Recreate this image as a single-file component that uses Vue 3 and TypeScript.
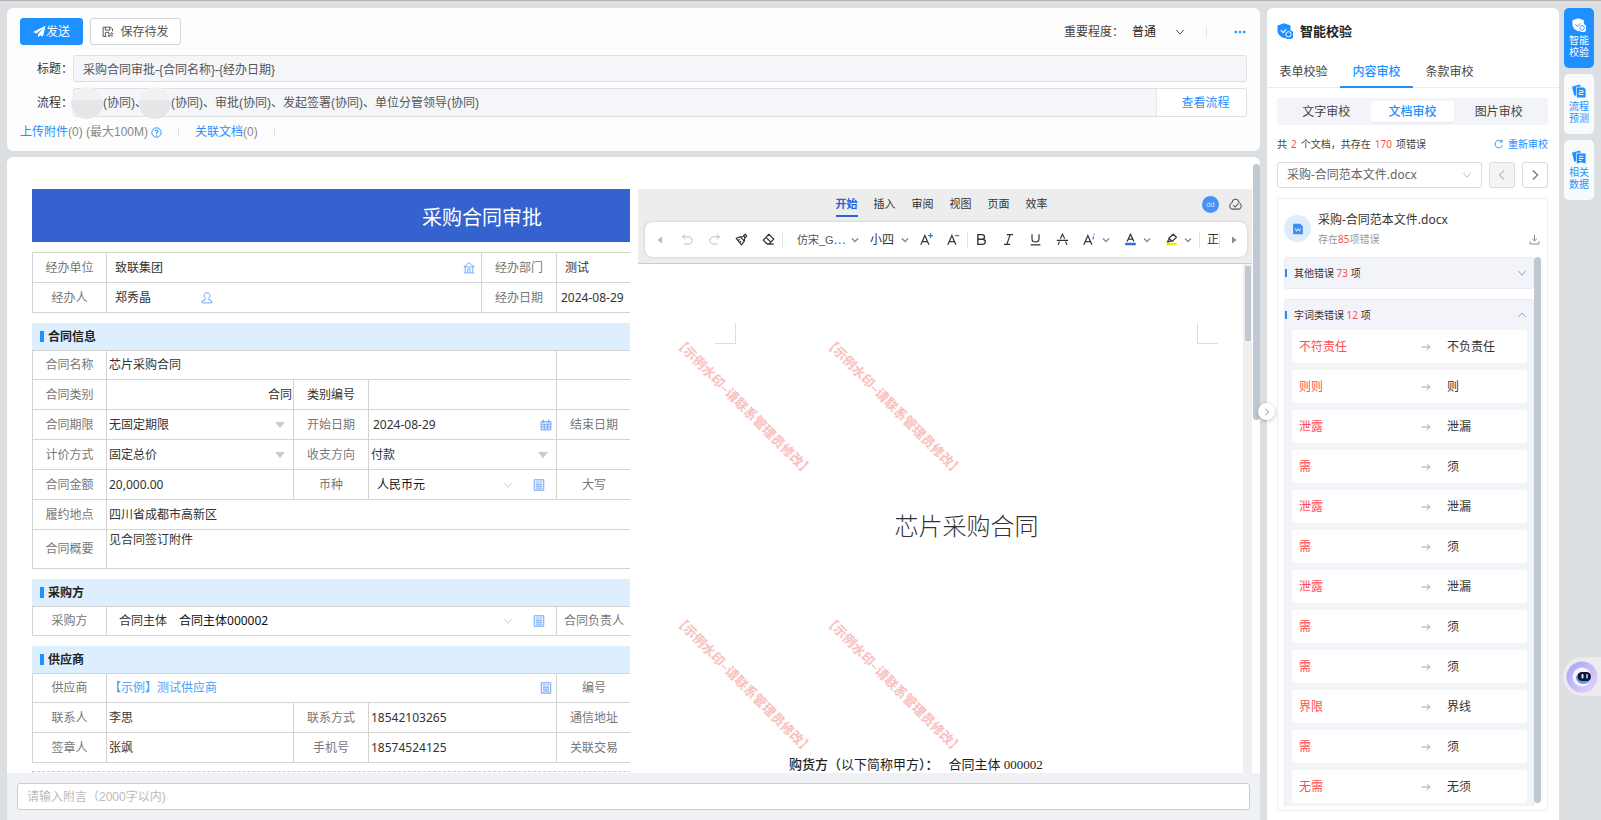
<script setup lang="ts">
import { ref } from 'vue'

type Kind = 'label' | 'input' | 'select' | 'area' | 'link' | 'empty'

interface Cell {
  kind: Kind
  id?: string
  text?: string
  span?: number
  icon?: string
  caret?: 'solid' | 'thin'
  tone?: string
  prefix?: string
}

interface Section {
  title?: string
  cols: number[]
  rows: Cell[][]
}

const icons: Record<string, string> = {
  send: '<path fill="currentColor" d="M15.5.8 0 8.6l4.3 1.900L12.600 4 6.200 11.300v4.200l2.500-3 3.600 1.600z"/>',
  save: '<path fill="none" stroke="currentColor" stroke-width="1.300" d="M6 14H1.500V1.500h10L14 4v3M4.500 1.500v4h6v-4M4.500 14V8.500h5M8 10.500h6.500l-2-2M14.500 13H8l2 2"/>',
  help: '<circle cx="8" cy="8" r="6.800" fill="none" stroke="currentColor" stroke-width="1.400"/><path fill="none" stroke="currentColor" stroke-width="1.500" d="M5.900 6.300C5.900 3.600 10.200 3.800 10.200 6.200 10.200 7.800 8 7.800 8 9.600M8 10.800v1.500"/>',
  chevDown: '<path fill="none" stroke="currentColor" stroke-width="1.500" d="M2 4.500l6 7 6-7"/>',
  chevUp: '<path fill="none" stroke="currentColor" stroke-width="1.500" d="M2 11l6-6 6 6"/>',
  chevLeft: '<path fill="none" stroke="currentColor" stroke-width="1.500" d="M11 2L4.500 8l6.500 6"/>',
  chevRight: '<path fill="none" stroke="currentColor" stroke-width="1.700" d="M5 2l6.500 6L5 14"/>',
  caret: '<path fill="none" stroke="currentColor" stroke-width="2.600" d="M2 5l6 6 6-6"/>',
  solid: '<path fill="currentColor" d="M0 3h16L8 13z"/>',
  triLeft: '<path fill="currentColor" d="M12 1v14L3 8z"/>',
  triRight: '<path fill="currentColor" d="M4 1v14l9-7z"/>',
  dots: '<g fill="currentColor"><circle cx="2.500" cy="8" r="1.800"/><circle cx="8" cy="8" r="1.800"/><circle cx="13.500" cy="8" r="1.800"/></g>',
  house: '<path fill="none" stroke="currentColor" stroke-width="1.200" d="M1 6.500L8 1l7 5.500zM3 6.500V14M6.500 14V9h3v5M13 6.500V14M1 14.500h14"/>',
  person: '<path fill="none" stroke="currentColor" stroke-width="1.300" d="M8 1.200c5 0 4.600 5.800 2 7.600v1.400l4.500 1.800v2.500h-13V12L6 10.200V8.800C3.400 7 3 1.200 8 1.200z"/>',
  calendar: '<path fill="#dcebff" stroke="currentColor" stroke-width="1.300" d="M1.500 3.500h13v11h-13z"/><path stroke="currentColor" stroke-width="1.600" d="M4.500 1v4M11.500 1v4"/><path stroke="currentColor" stroke-width="1.200" d="M1.500 7h13M1.500 10.700h13M5.800 7v7.500M10.200 7v7.500"/>',
  sheet: '<path fill="#e3f0ff" stroke="currentColor" stroke-width="1.300" d="M1.700 1h12.600v14H1.700z"/><path stroke="currentColor" stroke-width="1.300" d="M4.500 4h2.500M9 4h2.500M4 7h8M4 9.600h8M4 12.200h8"/>',
  undo: '<path fill="none" stroke="currentColor" stroke-width="1.200" d="M5 1.500L2 4.700l3 3.200M2 4.700h7.500c5.600 0 5.600 9 0 9H4"/>',
  redo: '<path fill="none" stroke="currentColor" stroke-width="1.200" d="M11 1.500l3 3.200-3 3.200M14 4.700H6.500c-5.600 0-5.600 9 0 9H12"/>',
  brush: '<path fill="none" stroke="currentColor" stroke-width="1.500" stroke-linejoin="round" d="M1.500 6.500l5-1.700 3 -.3L12.500 1.500l2 2-3 3.300.2 3L8 14.500zM6.500 5l5 5M4 9l2-1M6 11.500l1.500-1.500M10 3l3 3"/>',
  eraser: '<path fill="none" stroke="currentColor" stroke-width="1.500" stroke-linejoin="round" d="M8.500 1.500l6 6-6 6H6.300L1.500 8.700zM4.800 5.200l6 6M6.300 13.800H14.500"/>',
  fontUp: '<path fill="none" stroke="currentColor" stroke-width="1.500" d="M1 14.500L6 3l5 11.500M2.800 10.500h6.400"/><path stroke="#2b7be4" stroke-width="1.500" d="M10 3.200h6M13 .2v6"/>',
  fontDown: '<path fill="none" stroke="currentColor" stroke-width="1.500" d="M1 14.500L6 3l5 11.500M2.800 10.500h6.400"/><path stroke="#2b7be4" stroke-width="1.500" d="M10 3.200h5"/>',
  bold: '<path fill="none" stroke="currentColor" stroke-width="1.700" d="M3.500 2h5c4.300 0 4.300 5.700 0 5.700h-5zM3.500 7.700h5.700c4.600 0 4.600 6.300 0 6.300H3.500z"/>',
  italic: '<path fill="none" stroke="currentColor" stroke-width="1.500" d="M6 2h7.500M2.500 14H10M10 2L6 14"/>',
  underline: '<path fill="none" stroke="currentColor" stroke-width="1.500" d="M3.700 1.500v5.500c0 5.300 8.600 5.300 8.600 0V1.500M2 14.500h12"/>',
  strike: '<path fill="none" stroke="currentColor" stroke-width="1.400" d="M1 9h14M5.300 7L8 1.500 10.700 7M4.300 10.500L2.500 14.500M11.700 10.500l1.800 4"/>',
  effect: '<path fill="none" stroke="currentColor" stroke-width="1.500" d="M1 14.500L6 3l5 11.500M2.800 10.500h6.400"/><path stroke="#2b7be4" stroke-width="1.500" d="M13.500 1v1.500M13 4l-.8 4"/>',
  color: '<path fill="none" stroke="currentColor" stroke-width="1.500" d="M3.800 10.500L8 1.500l4.200 9M5.300 7.500h5.400"/><path fill="#2f6fe0" d="M1.500 12h13v3h-13z"/>',
  marker: '<path fill="none" stroke="currentColor" stroke-width="1.500" stroke-linejoin="round" d="M10 1.500l4 3.700-4.600 4.800H6.500L4.300 11H3l1.800-3V6.500zM5 6.800L9 10"/><path fill="#eaea18" d="M1.500 12h13v3h-13z"/>',
  cloud: '<path fill="none" stroke="currentColor" stroke-width="1.300" d="M8 1.500c3 0 4 2 4.300 4.200 4.500 2 3 8-.8 8h-7c-3.800 0-5.300-6-.8-8C4 3.500 5 1.500 8 1.500zM5 8.800l2.500 2.400L11.500 7"/>',
  shield: '<path fill="currentColor" d="M7 .3l6.500 2.200v4.700a4.700 4.700 0 1 1-5.200 7.200L7 15.200C3 13.400.5 11 .5 7.500v-5z"/><path fill="none" stroke="#fff" stroke-width="1.100" d="M3.800 7.200l2.400 2.400L9 6.200"/><circle cx="11.500" cy="11.300" r="2.600" fill="none" stroke="#fff" stroke-width="1"/>',
  shieldWhite: '<path fill="#fff" d="M7 .3l6.500 2.200v4.700a4.700 4.700 0 1 1-5.200 7.200L7 15.200C3 13.400.5 11 .5 7.500v-5z"/><path fill="none" stroke="#1e90ff" stroke-width="1.100" d="M3.800 7.200l2.400 2.400L9 6.200"/><circle cx="11.500" cy="11.300" r="2.600" fill="none" stroke="#1e90ff" stroke-width="1"/>',
  flow: '<path fill="currentColor" d="M0 3L9 .5l1.200 2.700H4.800v9.800L2.500 13zM5.500 4h8l2 2v9.300h-10z"/><path fill="none" stroke="#fff" stroke-width="1" d="M8 7.500h4.800v2.200H8.200v2.300h4.800"/>',
  data: '<path fill="currentColor" d="M0 3L9 .5l1.200 2.700H4.800v9.800L2.500 13zM5.500 4h10v11.300l-5-1.300-5 1.300z"/><path stroke="#fff" stroke-width="1.100" d="M8 7.200h5M8 9.700h5M8 12h3"/>',
  refresh: '<path fill="none" stroke="currentColor" stroke-width="1.500" d="M13.500 9.500A6 6 0 1 1 12 4M12.700 1v3.800H9"/>',
  doc: '<path fill="#3f8cf3" d="M1.500 1H11l3.500 3.500V15h-13z"/><path fill="none" stroke="#fff" stroke-width="1.100" d="M4.500 7l1.500 4L8 7.500l2 3.500 1.500-4"/>',
  download: '<path fill="none" stroke="currentColor" stroke-width="1.400" d="M8 1v9M4.500 6.800L8 10.200l3.500-3.400M1.500 10.500v4h13v-4"/>',
  arrow: '<path fill="none" stroke="currentColor" stroke-width="1.400" d="M1 8h13M9 3l5.200 5L9 13"/>'
}

const L = (text: string, id?: string, tone = ''): Cell => ({ kind: 'label', text, id, tone })

const sections: Section[] = [
  {
    cols: [74, 375, 75, 376],
    rows: [
      [L('经办单位', 'unit'), { kind: 'input', id: 'unit', text: '致联集团', icon: 'house', tone: 'inset' }, L('经办部门', 'dept'), { kind: 'input', id: 'dept', text: '测试', tone: 'inset' }],
      [L('经办人', 'agent'), { kind: 'input', id: 'agent', text: '郑秀晶', icon: 'person', tone: 'inset short' }, L('经办日期', 'handled'), { kind: 'input', id: 'handled', text: '2024-08-29', tone: 'date' }]
    ]
  },
  {
    title: '合同信息',
    cols: [74, 187, 75, 188, 75, 301],
    rows: [
      [L('合同名称', 'name'), { kind: 'input', id: 'name', text: '芯片采购合同', span: 3 }, { kind: 'empty', span: 2 }],
      [L('合同类别'), { kind: 'empty', text: '合同' }, L('类别编号', 'code', 'dark'), { kind: 'input', id: 'code', text: '' }, L(''), { kind: 'empty' }],
      [L('合同期限', 'term'), { kind: 'select', id: 'term', text: '无固定期限', caret: 'solid' }, L('开始日期', 'start'), { kind: 'input', id: 'start', text: '2024-08-29', icon: 'calendar', tone: 'date' }, L('结束日期', 'end'), { kind: 'input', id: 'end', text: '' }],
      [L('计价方式', 'pricing'), { kind: 'select', id: 'pricing', text: '固定总价', caret: 'solid' }, L('收支方向', 'direction'), { kind: 'select', id: 'direction', text: '付款', caret: 'solid' }, L(''), { kind: 'empty' }],
      [L('合同金额', 'amount'), { kind: 'input', id: 'amount', text: '20,000.00' }, L('币种', 'currency'), { kind: 'select', id: 'currency', text: '人民币元', caret: 'thin', icon: 'sheet', tone: 'inset' }, L('大写', 'words'), { kind: 'input', id: 'words', text: '' }],
      [L('履约地点', 'place'), { kind: 'input', id: 'place', text: '四川省成都市高新区', span: 5 }],
      [L('合同概要', 'summary'), { kind: 'area', id: 'summary', text: '见合同签订附件', span: 5 }]
    ]
  },
  {
    title: '采购方',
    cols: [74, 187, 75, 188, 75, 301],
    rows: [
      [L('采购方', 'buyer'), { kind: 'select', id: 'buyer', text: '合同主体000002', prefix: '合同主体', caret: 'thin', icon: 'sheet', span: 3, tone: 'inset' }, L('合同负责人', 'owner'), { kind: 'input', id: 'owner', text: '' }]
    ]
  },
  {
    title: '供应商',
    cols: [74, 187, 75, 188, 75, 301],
    rows: [
      [L('供应商'), { kind: 'link', text: '【示例】测试供应商', icon: 'sheet', span: 3 }, L('编号', 'no'), { kind: 'input', id: 'no', text: '' }],
      [L('联系人', 'contact'), { kind: 'input', id: 'contact', text: '李思' }, L('联系方式', 'phone'), { kind: 'input', id: 'phone', text: '18542103265' }, L('通信地址', 'address'), { kind: 'input', id: 'address', text: '' }],
      [L('签章人', 'signer'), { kind: 'input', id: 'signer', text: '张飒' }, L('手机号', 'mobile'), { kind: 'input', id: 'mobile', text: '18574524125' }, L('关联交易', 'related'), { kind: 'input', id: 'related', text: '' }]
    ]
  }
]

const menus = ['开始', '插入', '审阅', '视图', '页面', '效率']
const formats = ['bold', 'italic', 'underline', 'strike']
const dropFormats = ['effect', 'color', 'marker']
const formatNames: Record<string, string> = {
  undo: '撤销', redo: '恢复', brush: '格式刷', eraser: '清除格式', bold: '加粗', italic: '倾斜',
  underline: '下划线', strike: '删除线', effect: '文字效果', color: '字体颜色', marker: '突出显示'
}
const marks = ['m1', 'm2', 'm3', 'm4']

const checkTabs = ['表单校验', '内容审校', '条款审校']
const checkTab = ref('内容审校')
const kinds = ['文字审校', '文档审校', '图片审校']
const kind = ref('文档审校')

const fixes: [string, string][] = [
  ['不符责任', '不负责任'],
  ['则则', '则'],
  ['泄露', '泄漏'],
  ['需', '须'],
  ['泄露', '泄漏'],
  ['需', '须'],
  ['泄露', '泄漏'],
  ['需', '须'],
  ['需', '须'],
  ['界限', '界线'],
  ['需', '须'],
  ['无需', '无须']
]

const rail = [
  { icon: 'shieldWhite', lines: ['智能', '校验'], on: true },
  { icon: 'flow', lines: ['流程', '预测'], on: false },
  { icon: 'data', lines: ['相关', '数据'], on: false }
]
const subject = ref('采购合同审批-{合同名称}-{经办日期}')
const note = ref('')
</script>

<template>
  <div class="app">
    <main class="work">
      <section class="card head">
        <div class="actions">
          <button class="btn primary"><svg class="i13" viewBox="0 0 16 16" v-html="icons.send" />发送</button>
          <button class="btn"><svg class="i12" viewBox="0 0 16 16" v-html="icons.save" /><span>保存待发</span></button>
          <div class="priority">
            <label for="priority">重要程度：</label>
            <select id="priority" class="plain"><option>普通</option></select>
            <svg class="i10" viewBox="0 0 16 16" v-html="icons.chevDown" />
            <i class="vline" />
            <button class="more" aria-label="更多"><svg class="i12" viewBox="0 0 16 16" v-html="icons.dots" /></button>
          </div>
        </div>
        <div class="field">
          <label for="subject">标题：</label>
          <input id="subject" v-model="subject" class="subject" type="text" />
        </div>
        <div class="field">
          <span>流程：</span>
          <div class="flow">
            <i class="smudge first" /><span>(协同)、</span><i class="smudge" /><span>(协同)、审批(协同)、发起签署(协同)、单位分管领导(协同)</span>
            <button class="view">查看流程</button>
          </div>
        </div>
        <div class="attach">
          <a href="#">上传附件</a><span>(0) (最大100M)</span>
          <svg class="i11 help" viewBox="0 0 16 16" v-html="icons.help" />
          <i class="vline" />
          <a href="#">关联文档</a><span>(0)</span>
          <i class="vline" />
        </div>
      </section>

      <section class="card body">
        <div class="scroll">
          <div class="split">
            <div class="form-pane">
              <form class="form" @submit.prevent>
                <h1 class="banner">采购合同审批</h1>
                <div v-for="(s, si) in sections" :key="si" class="block">
                  <h2 v-if="s.title" class="caption">{{ s.title }}</h2>
                  <table class="grid">
                    <colgroup><col v-for="(w, ci) in s.cols" :key="ci" :style="{ width: w + 'px' }" /></colgroup>
                    <tbody>
                      <tr v-for="(r, ri) in s.rows" :key="ri">
                        <template v-for="(c, ci) in r" :key="ci">
                          <th v-if="c.kind === 'label'" :class="c.tone"><label v-if="c.id" :for="c.id">{{ c.text }}</label><template v-else>{{ c.text }}</template></th>
                          <td v-else :colspan="c.span || 1">
                            <div class="cell" :class="[c.kind, c.tone, c.caret]">
                              <span v-if="c.prefix" class="prefix">{{ c.prefix }}</span>
                              <input v-if="c.kind === 'input'" :id="c.id" type="text" :value="c.text" />
                              <select v-else-if="c.kind === 'select'" :id="c.id"><option>{{ c.text }}</option></select>
                              <textarea v-else-if="c.kind === 'area'" :id="c.id" :value="c.text" />
                              <a v-else-if="c.kind === 'link'" href="#">{{ c.text }}</a>
                              <template v-else>{{ c.text }}</template>
                              <svg v-if="c.caret" class="i10 drop" viewBox="0 0 16 16" v-html="c.caret === 'solid' ? icons.solid : icons.chevDown" />
                              <svg v-if="c.icon" class="i12 pick" viewBox="0 0 16 16" v-html="icons[c.icon]" />
                            </div>
                          </td>
                        </template>
                      </tr>
                    </tbody>
                  </table>
                </div>
                <div class="next" />
              </form>
            </div>

            <div class="editor">
              <header class="ribbon">
                <div class="menus">
                  <nav>
                    <button v-for="(m, i) in menus" :key="m" class="menu" :class="{ on: i === 0 }">{{ m }}</button>
                  </nav>
                  <div class="who"><span class="avatar">dd</span><svg class="i13" viewBox="0 0 16 16" v-html="icons.cloud" /></div>
                </div>
                <div class="tools">
                  <button class="edge faint" aria-label="向左"><svg class="i8" viewBox="0 0 16 16" v-html="icons.triLeft" /></button>
                  <button v-for="t in ['undo', 'redo', 'brush', 'eraser']" :key="t" class="tool" :class="{ faint: t.endsWith('do') }" :aria-label="formatNames[t]"><svg class="i13" viewBox="0 0 16 16" v-html="icons[t]" /></button>
                  <i class="sep" />
                  <div class="pickbox face"><select aria-label="字体"><option>仿宋_G⋯</option></select><svg class="i8" viewBox="0 0 16 16" v-html="icons.caret" /></div>
                  <div class="pickbox size"><select aria-label="字号"><option>小四</option></select><svg class="i8" viewBox="0 0 16 16" v-html="icons.caret" /></div>
                  <button class="tool" aria-label="增大字号"><svg class="i13" viewBox="0 0 16 16" v-html="icons.fontUp" /></button>
                  <button class="tool" aria-label="减小字号"><svg class="i13" viewBox="0 0 16 16" v-html="icons.fontDown" /></button>
                  <i class="sep" />
                  <button v-for="t in formats" :key="t" class="tool" :aria-label="formatNames[t]"><svg class="i13" viewBox="0 0 16 16" v-html="icons[t]" /></button>
                  <button v-for="t in dropFormats" :key="t" class="tool wide" :aria-label="formatNames[t]"><svg class="i13" viewBox="0 0 16 16" v-html="icons[t]" /><svg class="i8" viewBox="0 0 16 16" v-html="icons.caret" /></button>
                  <i class="sep" />
                  <button class="style">正</button>
                  <i class="sep" />
                  <button class="edge last" aria-label="向右"><svg class="i8" viewBox="0 0 16 16" v-html="icons.triRight" /></button>
                </div>
              </header>
              <div class="paper-wrap">
                <article class="paper">
                  <div class="corners"><i class="corner left" /><i class="corner right" /></div>
                  <h2>芯片采购合同</h2>
                  <p><b>购货方（</b>以下简称甲方<b>）：</b><span class="party">合同主体 000002</span></p>
                  <span v-for="m in marks" :key="m" class="mark" :class="m">【示例水印–请联系管理员修改】</span>
                </article>
                <div class="track"><i class="thumb" /></div>
              </div>
            </div>
          </div>
          <div class="gutter"><i class="thumb" /></div>
        </div>
        <footer class="foot">
          <input v-model="note" type="text" placeholder="请输入附言（2000字以内)" aria-label="附言" />
        </footer>
      </section>
      <button class="fold" aria-label="收起面板"><svg class="i8" viewBox="0 0 16 16" v-html="icons.chevRight" /></button>
    </main>

    <aside class="panel">
      <h2 class="panel-title"><svg class="i16" viewBox="0 0 16 16" v-html="icons.shield" />智能校验</h2>
      <nav class="tabs">
        <button v-for="t in checkTabs" :key="t" class="tab" :class="{ on: t === checkTab }" @click="checkTab = t">{{ t }}</button>
      </nav>
      <div class="panel-body">
        <div class="kinds">
          <button v-for="k in kinds" :key="k" :class="{ on: k === kind }" @click="kind = k">{{ k }}</button>
        </div>
        <div class="tally">
          <span>共<em>2</em>个文档，共存在<em>170</em>项错误</span>
          <button class="again"><svg class="i10" viewBox="0 0 16 16" v-html="icons.refresh" />重新审校</button>
        </div>
        <div class="chooser">
          <div class="file"><select aria-label="文档"><option>采购-合同范本文件.docx</option></select><svg class="i10" viewBox="0 0 16 16" v-html="icons.chevDown" /></div>
          <button class="step off" disabled aria-label="上一个"><svg class="i12" viewBox="0 0 16 16" v-html="icons.chevLeft" /></button>
          <button class="step" aria-label="下一个"><svg class="i12" viewBox="0 0 16 16" v-html="icons.chevRight" /></button>
        </div>
        <div class="report">
          <div class="report-head">
            <span class="badge"><svg class="i12" viewBox="0 0 16 16" v-html="icons.doc" /></span>
            <div class="names">
              <strong>采购-合同范本文件.docx</strong>
              <small>存在<em>85</em>项错误</small>
            </div>
            <button class="save" aria-label="下载"><svg class="i11" viewBox="0 0 16 16" v-html="icons.download" /></button>
          </div>
          <div class="groups">
            <div class="list">
              <div class="group">
                <button class="group-head"><i class="tick" /><span>其他错误 <em>73</em> 项</span><svg class="i10" viewBox="0 0 16 16" v-html="icons.chevDown" /></button>
              </div>
              <div class="group open">
                <button class="group-head"><i class="tick" /><span>字词类错误 <em>12</em> 项</span><svg class="i10" viewBox="0 0 16 16" v-html="icons.chevUp" /></button>
                <ul>
                  <li v-for="(f, i) in fixes" :key="i"><span class="wrong">{{ f[0] }}</span><svg class="i10" viewBox="0 0 16 16" v-html="icons.arrow" /><span class="right">{{ f[1] }}</span></li>
                </ul>
              </div>
            </div>
            <i class="bar" />
          </div>
        </div>
      </div>
    </aside>

    <nav class="rail">
      <button v-for="r in rail" :key="r.icon" class="rail-btn" :class="{ on: r.on }">
        <svg class="i14" viewBox="0 0 16 16" v-html="icons[r.icon]" />
        <span v-for="l in r.lines" :key="l">{{ l }}</span>
      </button>
    </nav>

    <button class="robot" aria-label="智能助手">
      <svg viewBox="0 0 32 32">
        <defs>
          <linearGradient id="halo" x1="0" y1="0" x2="1" y2="1"><stop offset="0" stop-color="#a2a4f4" /><stop offset="1" stop-color="#ecd3f8" /></linearGradient>
        </defs>
        <circle cx="16" cy="16" r="15.500" fill="url(#halo)" />
        <circle cx="16" cy="16" r="9.500" fill="#f4f4ff" />
        <ellipse cx="17.500" cy="17" rx="7.500" ry="6" fill="#5f9df5" />
        <rect x="11.500" y="11" width="13.500" height="9" rx="4.500" fill="#14182f" />
        <rect x="15.500" y="13" width="2" height="4.500" rx="1" fill="#dfe6ff" />
        <rect x="20" y="13" width="2" height="4.500" rx="1" fill="#8fb4ff" />
      </svg>
    </button>
  </div>
</template>

<style>
body {
  margin: 0;
  background: #dbdfe2;
}
</style>

<style scoped>
* {
  box-sizing: border-box;
}
.app {
  display: flex;
  height: 100vh;
  padding: 7px 7px 0;
  border-top: 1px solid #b3afb0;
  background: #dbdfe2;
  color: #444;
  font: 12px/18px "Liberation Sans", "Noto Sans CJK SC", sans-serif;
  overflow: hidden;
  position: relative;
}
svg {
  display: block;
  flex: none;
}
.i8 { width: 8px; height: 8px; }
.i10 { width: 10px; height: 10px; }
.i11 { width: 11px; height: 11px; }
.i12 { width: 12px; height: 12px; }
.i13 { width: 13px; height: 13px; }
.i14 { width: 14px; height: 14px; }
.i16 { width: 16px; height: 16px; }
button,
input,
select,
textarea {
  font: inherit;
  color: inherit;
  margin: 0;
  padding: 0;
  border: 0;
  background: none;
  border-radius: 0;
  outline: none;
}
select {
  appearance: none;
}
button {
  cursor: pointer;
}
a {
  color: #1e90ff;
  text-decoration: none;
}
em {
  font-style: normal;
  color: #ff4d4f;
}
h1,
h2,
p,
ul {
  margin: 0;
  padding: 0;
}
.work {
  flex: 1;
  min-width: 0;
  display: flex;
  flex-direction: column;
  gap: 6px;
  position: relative;
}
.card {
  background: #fff;
  border-radius: 6px;
}
.head {
  background: #fdfdfd;
  padding: 10px 13px;
  display: flex;
  flex-direction: column;
  gap: 6px;
}
.actions {
  display: flex;
  gap: 7px;
  padding-bottom: 4px;
}
.btn {
  height: 27px;
  width: 91px;
  display: flex;
  align-items: center;
  justify-content: center;
  gap: 6px;
  border: 1px solid #d4d4d6;
  border-radius: 3px;
  background: #fff;
  color: #555;
}
.btn.primary {
  width: 63px;
  gap: 0;
  border-color: #1e90ff;
  background: #1e90ff;
  color: #fff;
}
.priority {
  margin-left: auto;
  display: flex;
  align-items: center;
}
.priority .plain {
  width: 36px;
  margin: 0 7px 0 8px;
  color: #222;
}
.priority .vline {
  margin: 0 27px 0 21px;
}
.priority .more {
  color: #1e90ff;
  margin-right: 1px;
}
.vline {
  width: 1px;
  height: 10px;
  background: #e2e2e4;
}
.field {
  display: grid;
  grid-template-columns: 53px minmax(0, 1fr);
  align-items: center;
  color: #333;
}
.field > label,
.field > span {
  padding-left: 17px;
  white-space: nowrap;
}
.subject,
.flow {
  height: 27px;
  padding-left: 9px;
  border: 1px solid #dfe0e3;
  border-radius: 3px;
  background: #f5f6fa;
  color: #555;
}
.flow {
  height: 29px;
  padding: 0;
  display: flex;
  align-items: center;
  white-space: nowrap;
}
.smudge {
  width: 32px;
  height: 32px;
  flex: none;
  margin-left: -8px;
  border-radius: 50%;
  background: linear-gradient(#f1f1f3 42%, #e6e6e8 42%);
}
.smudge.first {
  margin-left: -3px;
}
.view {
  margin-left: auto;
  width: 90px;
  height: 27px;
  padding-left: 8px;
  border-left: 1px solid #e6e6e8;
  border-radius: 0 3px 3px 0;
  background: #fff;
  color: #1e90ff;
}
.attach {
  display: flex;
  align-items: center;
  color: #888;
}
.attach .help {
  margin: 0 16px 0 3px;
  color: #1e90ff;
}
.attach a:nth-of-type(2) {
  margin-left: 16px;
}
.attach .vline:last-child {
  margin-left: 16px;
}
.body {
  flex: 1;
  min-height: 0;
  display: flex;
  flex-direction: column;
  border-radius: 6px 6px 0 0;
}
.scroll {
  flex: 1;
  min-height: 0;
  display: flex;
}
.split {
  flex: 1;
  min-width: 0;
  display: flex;
  gap: 8px;
  padding: 32px 0 0 25px;
}
.form-pane {
  flex: 598 1 0;
  min-width: 0;
  overflow: hidden;
}
.form {
  width: 900px;
  font-family: "Noto Sans", "Noto Sans CJK SC", sans-serif;
}
.banner {
  padding: 14px 0 9px;
  background: #3463cf;
  color: #fff;
  font-weight: 400;
  font-size: 20px;
  line-height: 30px;
  text-align: center;
}
.block {
  margin-top: 10px;
}
.caption {
  position: relative;
  height: 27px;
  padding-left: 16px;
  background: #ddeefe;
  color: #222;
  font-size: 12px;
  font-weight: 700;
  line-height: 27px;
}
.caption::before {
  content: "";
  position: absolute;
  left: 8px;
  top: 8px;
  width: 4px;
  height: 11px;
  background: #1e90ff;
}
.grid {
  width: 100%;
  table-layout: fixed;
  border-collapse: collapse;
}
.grid tr {
  height: 30px;
}
.grid th,
.grid td {
  padding: 0;
  border: 1px solid #d4d4d4;
  color: #333;
}
.grid th {
  color: #777;
  font-weight: 400;
  text-align: center;
}
.grid th.dark {
  color: #333;
}
.cell {
  height: 29px;
  display: flex;
  align-items: center;
  padding: 0 4px 0 2px;
}
.caption + .grid tr:first-child {
  height: 29px;
}
.caption + .grid tr:first-child .cell {
  height: 28px;
}
.cell.area {
  height: 38px;
}
.cell.empty {
  justify-content: flex-end;
  padding: 0 1px;
}
.cell.date {
  padding-left: 4px;
}
.cell.inset {
  padding: 0 6px 0 8px;
}
.cell input,
.cell select,
.cell textarea {
  flex: 1;
  min-width: 0;
  height: 20px;
  line-height: 20px;
}
.cell textarea {
  height: 38px;
  resize: none;
  overflow: hidden;
}
.cell.short input {
  flex: 0 0 86px;
}
.cell.link a {
  flex: 1;
  color: #4ea1f7;
}
.prefix {
  margin: 0 12px 0 4px;
}
.drop {
  margin-right: 4px;
  color: #ccc;
}
.cell.thin .drop {
  margin-right: 20px;
}
.cell.thin select {
  color: #111;
}
.cell.thin .pick {
  margin-right: 5px;
}
.pick {
  color: #6ba5f7;
}
.next {
  margin-top: 8px;
  height: 20px;
  border: 1px dashed #ccc;
}
.editor {
  flex: 614 1 0;
  min-width: 0;
  display: flex;
  flex-direction: column;
}
.ribbon {
  padding: 0 5px 6px 7px;
  border-bottom: 1px solid #ccc;
  background: #ededed;
}
.menus {
  display: flex;
  align-items: center;
  height: 33px;
  padding-bottom: 2px;
}
.menus nav {
  flex: 1;
  display: flex;
  justify-content: center;
  gap: 16px;
  padding-left: 36px;
}
.menu {
  color: #333;
  font-size: 11px;
  line-height: 22px;
  border-bottom: 2px solid transparent;
}
.menu.on {
  color: #2a62d8;
  font-weight: 700;
  border-color: #2a62d8;
}
.who {
  display: flex;
  align-items: center;
  gap: 10px;
  padding-right: 5px;
  color: #555;
}
.avatar {
  width: 17px;
  height: 17px;
  border-radius: 50%;
  background: #4792f2;
  color: #d5e6ff;
  font-size: 7px;
  line-height: 17px;
  text-align: center;
}
.tools {
  display: flex;
  align-items: center;
  height: 35px;
  border-radius: 8px;
  background: #fff;
  box-shadow: 0 0 3px rgba(0, 0, 0, 0.18);
  color: #333;
  overflow: hidden;
}
.tool {
  flex: 0 0 27px;
  display: flex;
  align-items: center;
  justify-content: center;
}
.tool.wide {
  flex-basis: 41px;
  gap: 6px;
}
.edge {
  flex: 0 0 29px;
  display: flex;
  justify-content: center;
  color: #666;
}
.edge.last {
  flex: 1 1 0;
}
.tools .faint {
  color: #bbb;
}
.tools .i8 {
  color: #888;
}
.tools .faint .i8 {
  color: #bbb;
}
.sep {
  width: 1px;
  height: 16px;
  flex: none;
  background: #e4e4e4;
}
.pickbox {
  flex: none;
  display: flex;
  align-items: center;
}
.pickbox select {
  flex: 1;
  min-width: 0;
}
.face {
  width: 76px;
  padding-left: 14px;
  font-size: 11px;
  color: #555;
}
.size {
  width: 54px;
  padding: 0 4px 0 11px;
}
.style {
  flex: none;
  padding-left: 7px;
}
.paper-wrap {
  flex: 1;
  min-height: 0;
  display: flex;
}
.paper {
  flex: 1;
  min-width: 0;
  position: relative;
  overflow: hidden;
  padding: 59px 25px 0 77px;
}
.corners {
  display: flex;
  justify-content: space-between;
}
.corner {
  width: 21px;
  height: 21px;
  border: solid #ddd;
  border-width: 0 1px 1px 0;
}
.corner.right {
  border-width: 0 0 1px 1px;
}
.paper h2 {
  padding-top: 165px;
  color: #333;
  font-size: 24px;
  font-weight: 300;
  line-height: 36px;
  text-align: center;
}
.paper p {
  padding: 211px 0 0 74px;
  color: #222;
  font: 13px/18px "Liberation Serif", "Noto Sans CJK SC", serif;
  white-space: nowrap;
}
.paper b {
  font-weight: 500;
}
.party {
  margin-left: 10px;
}
.mark {
  position: absolute;
  width: 220px;
  height: 20px;
  left: -5px;
  top: 133px;
  color: rgba(240, 80, 80, 0.34);
  font-size: 13px;
  font-weight: 900;
  line-height: 20px;
  text-align: center;
  white-space: nowrap;
  transform: rotate(45deg);
}
.mark.m2,
.mark.m4 {
  left: 145px;
}
.mark.m3,
.mark.m4 {
  top: 411px;
}
.track {
  width: 9px;
  padding: 2px 1px 0 2px;
  background: #f0f0f0;
}
.thumb {
  display: block;
  height: 75px;
  background: #bec9d4;
}
.gutter {
  width: 8px;
  padding: 7px 0 0 1px;
}
.gutter .thumb {
  height: 256px;
  border-radius: 4px;
}
.foot {
  padding: 10px;
  background: #eff1f5;
}
.foot input {
  display: block;
  width: 100%;
  height: 27px;
  padding-left: 9px;
  border: 1px solid #b9cfe2;
  border-radius: 3px;
  background: #fff;
}
.foot input::placeholder {
  color: #bbb;
}
.fold {
  position: absolute;
  z-index: 2;
  right: -15px;
  top: 395px;
  width: 17px;
  height: 17px;
  display: grid;
  place-items: center;
  border-radius: 50%;
  background: #fff;
  box-shadow: 0 1px 4px rgba(0, 0, 0, 0.25);
  color: #777;
}
.panel {
  width: 292px;
  margin-left: 7px;
  display: flex;
  flex-direction: column;
  border-radius: 6px 6px 0 0;
  background: #fff;
  font-family: "Noto Sans", "Noto Sans CJK SC", sans-serif;
}
.panel-title {
  display: flex;
  align-items: center;
  gap: 7px;
  padding: 13px 10px 11px;
  color: #222;
  font-size: 13px;
  font-weight: 600;
  line-height: 20px;
}
.panel-title svg {
  color: #1e90ff;
}
.tabs {
  display: flex;
  border-bottom: 1px solid #ececee;
  height: 36px;
}
.tab {
  width: 73px;
  height: 36px;
  padding-top: 5px;
  border-bottom: 2px solid transparent;
}
.tab.on {
  color: #1e90ff;
  border-color: #1e90ff;
  font-weight: 500;
}
.panel-body {
  flex: 1;
  min-height: 0;
  display: flex;
  flex-direction: column;
  padding: 10px 11px 9px 10px;
}
.kinds {
  display: grid;
  grid-template-columns: repeat(3, 1fr);
  gap: 4px;
  height: 27px;
  padding: 3px 8px;
  border-radius: 3px;
  background: #f3f4f9;
}
.kinds .on {
  border-radius: 2px;
  background: #fff;
  box-shadow: 0 1px 1px #e6e8ee;
  color: #1e90ff;
  font-weight: 500;
}
.tally {
  display: flex;
  align-items: center;
  justify-content: space-between;
  height: 37px;
  font-size: 10px;
}
.tally em {
  margin: 0 4px;
}
.again {
  display: flex;
  align-items: center;
  gap: 4px;
  color: #1e90ff;
}
.chooser {
  display: flex;
  gap: 7px;
}
.file,
.step {
  height: 26px;
  border: 1px solid #dcdcde;
  border-radius: 3px;
  display: flex;
  align-items: center;
}
.file {
  flex: 1;
  padding: 0 9px;
  color: #666;
}
.file select {
  flex: 1;
  min-width: 0;
}
.file svg {
  color: #bbb;
}
.step {
  width: 26px;
  justify-content: center;
  color: #777;
}
.step.off {
  background: #f4f4f4;
  color: #bbb;
}
.report {
  flex: 1;
  min-height: 0;
  margin-top: 10px;
  padding: 0 6px 4px;
  border: 1px solid #eeeef0;
  border-radius: 3px;
  display: flex;
  flex-direction: column;
}
.report-head {
  display: flex;
  gap: 7px;
  padding: 12px 1px 8px 0;
}
.badge {
  width: 27px;
  height: 27px;
  margin-top: 4px;
  display: grid;
  place-items: center;
  border-radius: 50%;
  background: #dfecfb;
}
.names {
  flex: 1;
  display: flex;
  flex-direction: column;
  gap: 1px;
}
.names strong {
  color: #333;
  font-weight: 400;
}
.names small {
  color: #999;
  font-size: 10px;
  line-height: 19px;
}
.save {
  align-self: flex-end;
  padding-bottom: 4px;
  color: #888;
}
.groups {
  flex: 1;
  min-height: 0;
  display: flex;
}
.list {
  flex: 1;
  overflow: hidden;
}
.group {
  border: 1px solid #e9ebf1;
  border-radius: 3px;
  background: #f3f4f9;
}
.group.open {
  margin-top: 10px;
  height: 600px;
}
.group-head {
  width: 100%;
  height: 30px;
  display: flex;
  align-items: center;
  padding-right: 6px;
  color: #333;
  font-size: 10px;
}
.group-head svg {
  margin-left: auto;
  color: #999;
}
.tick {
  width: 2px;
  height: 8px;
  margin-right: 7px;
  background: #1e90ff;
}
ul {
  list-style: none;
  display: grid;
  gap: 7px;
  padding: 0 6px 0 7px;
}
li {
  height: 33px;
  display: flex;
  align-items: center;
  padding-left: 7px;
  border-radius: 3px;
  background: #fff;
}
.wrong {
  flex: 0 0 122px;
  color: #ff4d4f;
}
li svg {
  color: #999;
}
.right {
  margin-left: 16px;
  color: #333;
}
.bar {
  width: 7px;
  margin-bottom: 3px;
  border-radius: 4px;
  background: #bec9d4;
}
.rail {
  width: 30px;
  margin-left: 5px;
  display: flex;
  flex-direction: column;
  gap: 6px;
}
.rail-btn {
  height: 60px;
  display: flex;
  flex-direction: column;
  align-items: center;
  padding-top: 10px;
  border-radius: 5px;
  background: #f8fafb;
  color: #1e90ff;
  font-size: 10px;
  line-height: 12px;
}
.rail-btn svg {
  margin-bottom: 3px;
}
.rail-btn.on {
  background: #1e90ff;
  color: #fff;
}
.robot {
  position: absolute;
  right: 0;
  bottom: 124px;
  width: 38px;
  height: 39px;
  padding-left: 3px;
  border-radius: 20px 0 0 20px;
  background: #ececf0;
}
.robot svg {
  width: 32px;
  height: 32px;
}
</style>
